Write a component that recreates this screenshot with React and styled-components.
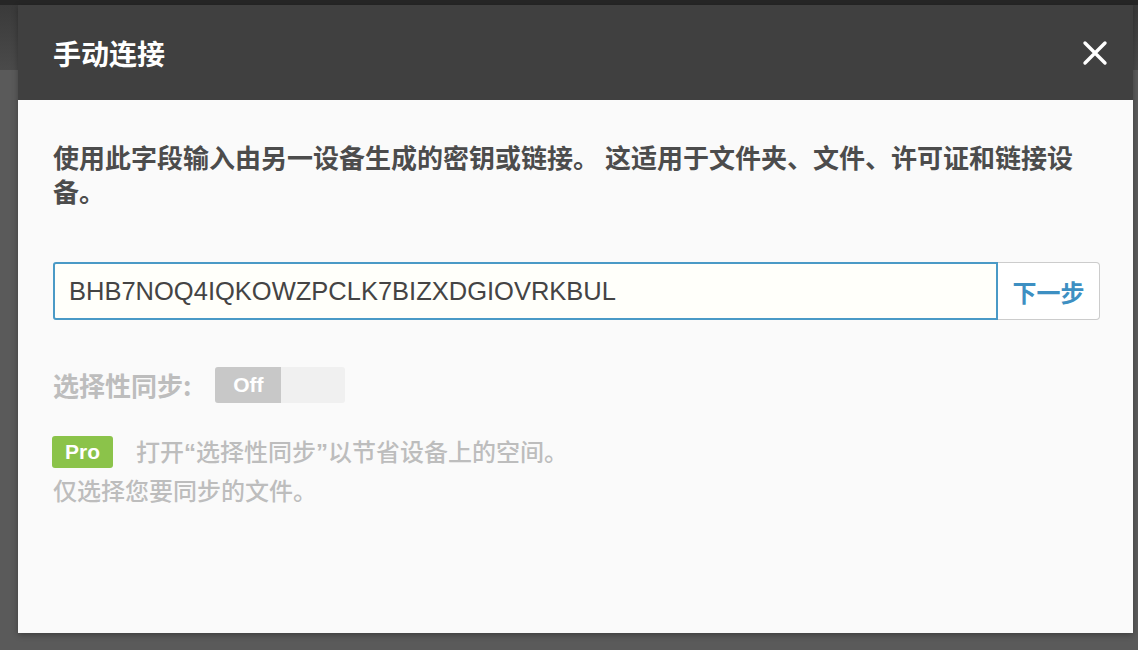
import React from 'react';
import styled, { createGlobalStyle } from 'styled-components';

const GlobalStyle = createGlobalStyle`
  html, body {
    margin: 0;
    padding: 0;
    background: #5a5a5a;
  }
  body {
    font-family: "Liberation Sans", "Noto Sans CJK SC", sans-serif;
  }
`;

const Backdrop = styled.div`
  width: 1138px;
  height: 650px;
  box-sizing: border-box;
  padding: 5px 5px 17px 18px;
  background: linear-gradient(#262626 0, #262626 5px, #3a3a3a 5px, #4a4a4a 70px, #5a5a5a 70px);
  display: flex;
`;

const Dialog = styled.div`
  flex: 1;
  display: flex;
  flex-direction: column;
  background: #fafafa;
  box-shadow: 0 2px 6px rgba(0, 0, 0, 0.3);
`;

const Header = styled.div`
  height: 95px;
  flex-shrink: 0;
  display: flex;
  align-items: center;
  justify-content: space-between;
  padding: 0 23px 0 35px;
  background: #404040;
`;

const Title = styled.h2`
  margin: 0;
  color: #ffffff;
  font-family: "Noto Sans CJK SC", sans-serif;
  font-size: 28px;
  font-weight: 700;
`;

const CloseButton = styled.button`
  border: none;
  background: none;
  padding: 0;
  width: 30px;
  height: 30px;
  display: flex;
  align-items: center;
  justify-content: center;
  cursor: pointer;
`;

const Body = styled.div`
  padding: 40px 33px 0 35px;
  font-family: "Noto Sans CJK SC", sans-serif;
`;

const Description = styled.p`
  margin: 0;
  font-size: 26px;
  line-height: 34px;
  font-weight: 700;
  color: #4c4c4c;
`;

const InputRow = styled.div`
  display: flex;
  margin-top: 54px;
  height: 58px;
`;

const KeyInput = styled.input`
  flex: 1;
  min-width: 0;
  box-sizing: border-box;
  border: 2px solid #4a9ac6;
  border-radius: 3px 0 0 3px;
  background: #fffffa;
  padding: 0 14px;
  font-family: "Liberation Sans", sans-serif;
  font-size: 25.5px;
  color: #444444;
  outline: none;
`;

const NextButton = styled.button`
  width: 102px;
  box-sizing: border-box;
  border: 1px solid #cccccc;
  border-left: none;
  border-radius: 0 4px 4px 0;
  background: #ffffff;
  color: #3d8fc2;
  font-family: "Noto Sans CJK SC", sans-serif;
  font-size: 24px;
  font-weight: 700;
  cursor: pointer;
`;

const SyncRow = styled.div`
  display: flex;
  align-items: center;
  gap: 24px;
  margin-top: 47px;
`;

const MutedLabel = styled.span`
  font-size: 26px;
  line-height: 36px;
  font-weight: 700;
  color: #bdbdbd;
`;

const Toggle = styled.div`
  display: flex;
  width: 130px;
  height: 36px;
  border-radius: 3px;
  overflow: hidden;
  background: #f0f0f0;
`;

const ToggleKnob = styled.div`
  width: 66px;
  display: flex;
  align-items: center;
  justify-content: center;
  background: #c8c8c8;
  color: #ffffff;
  font-family: "Liberation Sans", sans-serif;
  font-size: 21px;
  font-weight: 700;
`;

const ProNote = styled.div`
  margin-top: 30px;
  font-size: 24px;
  line-height: 38px;
  font-weight: 500;
  color: #bdbdbd;
`;

const ProLine = styled.div`
  display: flex;
  align-items: center;
  gap: 23px;
  height: 38px;
`;

const ProBadge = styled.span`
  display: inline-flex;
  align-items: center;
  justify-content: center;
  width: 61px;
  height: 32px;
  margin-left: -1px;
  border-radius: 3px;
  background: #8bc34a;
  color: #ffffff;
  font-family: "Liberation Sans", sans-serif;
  font-size: 21px;
  font-weight: 700;
`;

const Quote = styled.span`
  font-family: "Liberation Sans", sans-serif;
  font-weight: 700;
`;

function CloseIcon() {
  return (
    <svg width="26" height="26" viewBox="0 0 26 26">
      <path d="M3 3 L23 23 M23 3 L3 23" stroke="#ffffff" strokeWidth="3.4" strokeLinecap="round" />
    </svg>
  );
}

export default function App() {
  return (
    <>
      <GlobalStyle />
      <Backdrop>
        <Dialog>
          <Header>
            <Title>手动连接</Title>
            <CloseButton aria-label="close">
              <CloseIcon />
            </CloseButton>
          </Header>
          <Body>
            <Description>
              使用此字段输入由另一设备生成的密钥或链接。 这适用于文件夹、文件、许可证和链接设备。
            </Description>
            <InputRow>
              <KeyInput defaultValue="BHB7NOQ4IQKOWZPCLK7BIZXDGIOVRKBUL" />
              <NextButton>下一步</NextButton>
            </InputRow>
            <SyncRow>
              <MutedLabel>选择性同步:</MutedLabel>
              <Toggle>
                <ToggleKnob>Off</ToggleKnob>
              </Toggle>
            </SyncRow>
            <ProNote>
              <ProLine>
                <ProBadge>Pro</ProBadge>
                <span>
                  打开<Quote>“</Quote>选择性同步<Quote>”</Quote>以节省设备上的空间。
                </span>
              </ProLine>
              <div>仅选择您要同步的文件。</div>
            </ProNote>
          </Body>
        </Dialog>
      </Backdrop>
    </>
  );
}
